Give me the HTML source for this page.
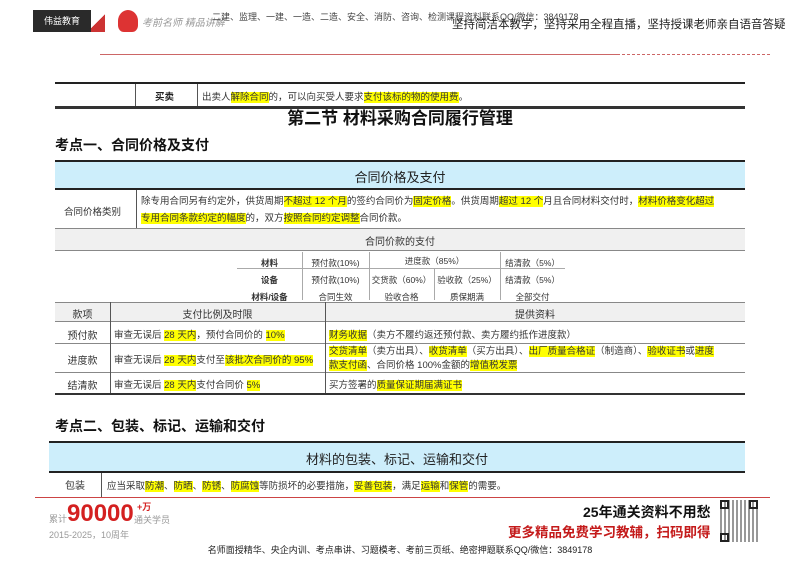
<!DOCTYPE html>
<html><head><meta charset="utf-8"><style>
*{margin:0;padding:0;box-sizing:border-box}
body{width:800px;height:565px;background:#fff;position:relative;overflow:hidden;font-family:"Liberation Sans","Noto Sans CJK SC",sans-serif;color:#333}
.a{position:absolute}
.hl{background:#ffff00}
.t{font-size:9.5px;white-space:nowrap}
.c{text-align:center}
.vl{position:absolute;width:1px;background:#555}
.hr{position:absolute;height:1px;background:#888}
</style></head><body>
<!-- header -->
<div class="a" style="left:33px;top:10px;width:58px;height:22px;background:#2a2a2a;color:#fff;font-size:9px;line-height:22px;text-align:center">伟益教育</div>
<div class="a" style="left:91px;top:10px;width:14px;height:22px;background:linear-gradient(135deg,#fff 50%,#c33 50%)"></div>
<div class="a" style="left:118px;top:10px;width:20px;height:22px;background:#d33;border-radius:50% 50% 30% 30%"></div>
<div class="a t" style="left:142px;top:14px;color:#999;font-size:10px;font-style:italic">考前名师 精品讲解</div>
<div class="a t" style="left:212px;top:10px;font-size:9px;color:#444">二建、监理、一建、一造、二造、安全、消防、咨询、检测课程资料联系QQ/微信：3849178</div>
<div class="a t" style="left:452px;top:16px;font-size:11.5px;color:#222">坚持简洁本教学，坚持采用全程直播，坚持授课老师亲自语音答疑</div>
<div class="a" style="left:100px;top:54px;width:520px;height:1px;background:#c66"></div>
<div class="a" style="left:622px;top:54px;width:148px;border-top:1px dashed #c66"></div>
<!-- top table -->
<div class="a" style="left:55px;top:82px;width:690px;height:2px;background:#222"></div>
<div class="a" style="left:55px;top:106px;width:690px;height:3px;background:#333"></div>
<div class="vl" style="left:135px;top:84px;height:22px"></div>
<div class="vl" style="left:197px;top:84px;height:22px"></div>
<div class="a t" style="left:155px;top:89px;font-weight:bold;color:#222">买卖</div>
<div class="a t" style="left:202px;top:89px">出卖人<span class="hl">解除合同</span>的，可以向买受人要求<span class="hl">支付该标的物的使用费</span>。</div>
<div class="a c" style="left:0;width:800px;top:104px;font-size:17px;font-weight:bold;color:#111">第二节 材料采购合同履行管理</div>
<div class="a" style="left:55px;top:135px;font-size:14px;font-weight:bold;color:#111">考点一、合同价格及支付</div>
<!-- table 2 -->
<div class="a" style="left:55px;top:160px;width:690px;height:30px;background:#cdeefb;border-top:2px solid #222;border-bottom:2px solid #222"></div>
<div class="a c" style="left:55px;width:690px;top:167px;font-size:13px;color:#222">合同价格及支付</div>
<div class="vl" style="left:136px;top:190px;height:38px"></div>
<div class="a t" style="left:64px;top:204px">合同价格类别</div>
<div class="a t" style="left:141px;top:193px;line-height:17px">除专用合同另有约定外，供货周期<span class="hl">不超过 12 个月</span>的签约合同价为<span class="hl">固定价格</span>。供货周期<span class="hl">超过 12 个</span>月且合同材料交付时，<span class="hl">材料价格变化超过</span><br><span class="hl">专用合同条款约定的幅度</span>的，双方<span class="hl">按照合同约定调整</span>合同价款。</div>
<div class="a" style="left:55px;top:228px;width:690px;height:23px;background:#f0f0f0;border-top:1px solid #888;border-bottom:1px solid #888"></div>
<div class="a c t" style="left:55px;width:690px;top:233px;font-size:10px">合同价款的支付</div>
<div class="hr" style="left:237px;top:268px;width:328px;background:#aaa"></div>
<div class="vl" style="left:302px;top:252px;height:48px;background:#aaa"></div>
<div class="vl" style="left:369px;top:252px;height:48px;background:#aaa"></div>
<div class="vl" style="left:434px;top:268px;height:32px;background:#aaa"></div>
<div class="vl" style="left:500px;top:252px;height:48px;background:#aaa"></div>
<div class="a t c" style="left:237px;width:65px;top:255px;font-size:8.5px;line-height:17px;font-weight:bold">材料<br>设备<br>材料/设备</div>
<div class="a t c" style="left:302px;width:67px;top:255px;font-size:8.5px;line-height:17px">预付款(10%)<br>预付款(10%)<br>合同生效</div>
<div class="a t c" style="left:369px;width:131px;top:255px;font-size:8.5px">进度款（85%）</div>
<div class="a t c" style="left:369px;width:65px;top:272px;font-size:8.5px;line-height:17px">交货款（60%）<br>验收合格</div>
<div class="a t c" style="left:434px;width:66px;top:272px;font-size:8.5px;line-height:17px">验收款（25%）<br>质保期满</div>
<div class="a t c" style="left:500px;width:65px;top:255px;font-size:8.5px;line-height:17px">结清款（5%）<br>结清款（5%）<br>全部交付</div>
<div class="a" style="left:55px;top:302px;width:690px;height:20px;background:#f0f0f0;border-top:1px solid #888;border-bottom:1px solid #888"></div>
<div class="hr" style="left:55px;top:343px;width:690px"></div>
<div class="hr" style="left:55px;top:372px;width:690px"></div>
<div class="a" style="left:55px;top:393px;width:690px;height:2px;background:#333"></div>
<div class="vl" style="left:110px;top:302px;height:91px"></div>
<div class="vl" style="left:325px;top:302px;height:91px"></div>
<div class="a t c" style="left:55px;width:55px;top:306px;font-size:10px">款项</div>
<div class="a t c" style="left:110px;width:215px;top:306px;font-size:10px">支付比例及时限</div>
<div class="a t c" style="left:325px;width:420px;top:306px;font-size:10px">提供资料</div>
<div class="a t c" style="left:55px;width:55px;top:327px;font-size:10px">预付款</div>
<div class="a t c" style="left:55px;width:55px;top:352px;font-size:10px">进度款</div>
<div class="a t c" style="left:55px;width:55px;top:377px;font-size:10px">结清款</div>
<div class="a t" style="left:114px;top:327px">审查无误后 <span class="hl">28 天内</span>，预付合同价的 <span class="hl">10%</span></div>
<div class="a t" style="left:114px;top:352px">审查无误后 <span class="hl">28 天内</span>支付至<span class="hl">该批次合同价的 95%</span></div>
<div class="a t" style="left:114px;top:377px">审查无误后 <span class="hl">28 天内</span>支付合同价 <span class="hl">5%</span></div>
<div class="a t" style="left:329px;top:327px"><span class="hl">财务收据</span>（卖方不履约返还预付款、卖方履约抵作进度款）</div>
<div class="a t" style="left:329px;top:345px;line-height:14px"><span class="hl">交货清单</span>（卖方出具）、<span class="hl">收货清单</span>（买方出具）、<span class="hl">出厂质量合格证</span>（制造商）、<span class="hl">验收证书</span>或<span class="hl">进度</span><br><span class="hl">款支付函</span>、合同价格 100%金额的<span class="hl">增值税发票</span></div>
<div class="a t" style="left:329px;top:377px">买方签署的<span class="hl">质量保证期届满证书</span></div>
<!-- section 2 -->
<div class="a" style="left:55px;top:416px;font-size:14px;font-weight:bold;color:#111">考点二、包装、标记、运输和交付</div>
<div class="a" style="left:49px;top:441px;width:696px;height:32px;background:#cdeefb;border-top:2px solid #222;border-bottom:2px solid #222"></div>
<div class="a c" style="left:49px;width:696px;top:449px;font-size:13px;color:#222">材料的包装、标记、运输和交付</div>
<div class="vl" style="left:101px;top:473px;height:24px"></div>
<div class="a t c" style="left:49px;width:52px;top:477px;font-size:10px">包装</div>
<div class="a t" style="left:107px;top:478px">应当采取<span class="hl">防潮</span>、<span class="hl">防晒</span>、<span class="hl">防锈</span>、<span class="hl">防腐蚀</span>等防损坏的必要措施，<span class="hl">妥善包装</span>，满足<span class="hl">运输</span>和<span class="hl">保管</span>的需要。</div>
<div class="a" style="left:35px;top:497px;width:735px;height:1px;background:#c44"></div>
<!-- footer -->
<div class="a t" style="left:49px;top:512px;font-size:9px;color:#999">累计</div>
<div class="a t" style="left:67px;top:500px;font-size:24px;font-weight:bold;color:#d42020">90000</div>
<div class="a t" style="left:137px;top:500px;font-size:9px;font-weight:bold;color:#d42020">+万</div>
<div class="a t" style="left:134px;top:513px;font-size:9px;color:#999">通关学员</div>
<div class="a t" style="left:49px;top:528px;font-size:9px;color:#999">2015-2025，10周年</div>
<div class="a t" style="left:583px;top:502px;font-size:14px;font-weight:bold;color:#111">25年通关资料不用愁</div>
<div class="a t" style="left:508px;top:521px;font-size:13.5px;font-weight:bold;color:#c41a1a">更多精品免费学习教辅，扫码即得</div>
<div class="a" style="left:720px;top:500px;width:38px;height:42px;background:repeating-linear-gradient(90deg,#555 0 2px,#fff 2px 4px),#fff;opacity:.6"></div>
<div class="a" style="left:720px;top:500px;width:9px;height:9px;border:2px solid #222"></div>
<div class="a" style="left:749px;top:500px;width:9px;height:9px;border:2px solid #222"></div>
<div class="a" style="left:720px;top:533px;width:9px;height:9px;border:2px solid #222"></div>
<div class="a t c" style="left:0;width:800px;top:543px;font-size:9px;color:#222">名师面授精华、央企内训、考点串讲、习题模考、考前三页纸、绝密押题联系QQ/微信：3849178</div>
</body></html>
